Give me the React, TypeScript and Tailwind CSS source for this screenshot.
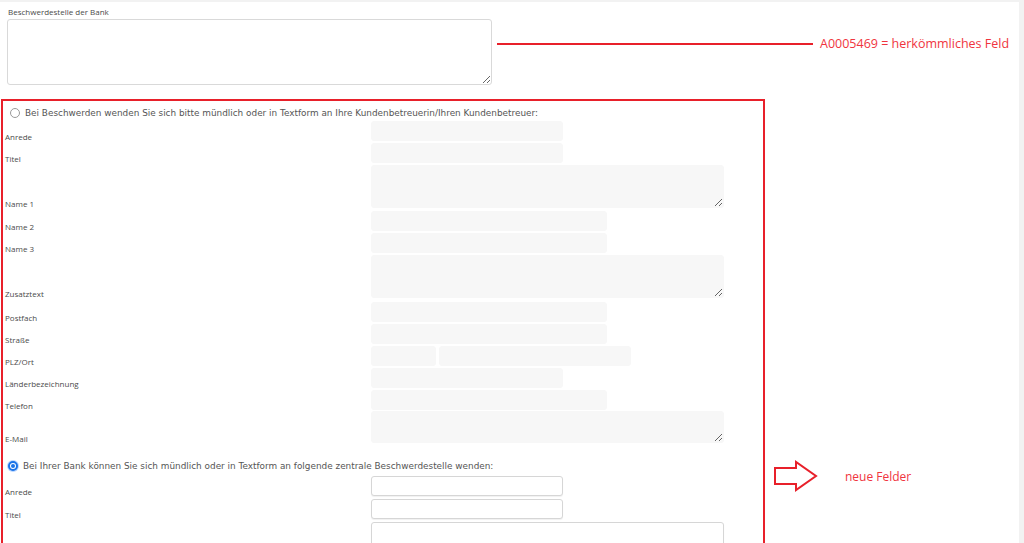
import React from 'react';

const labelFont = { fontFamily: '"Open Sans", "Noto Sans", sans-serif' };
const radioFont = { fontFamily: '"DejaVu Sans", Verdana, sans-serif' };

type Field = { w: number; h?: number; area?: boolean };

interface RowProps {
  label: string;
  fields: Field[];
  mb?: number;
  active?: boolean;
}

function Row({ label, fields, mb = 2, active = false }: RowProps) {
  const mbClass = mb === 1 ? 'mb-px' : mb === 3 ? 'mb-[3px]' : mb === 4 ? 'mb-[4px]' : 'mb-[2px]';
  const base = active
    ? 'bg-white border border-[#d6d6d6] shadow-[0_1px_1px_rgba(0,0,0,0.06)]'
    : 'bg-[#f7f7f7] border border-[#f7f7f7]';
  return (
    <div className={`flex items-end ${mbClass}`}>
      <div
        className="w-[368px] shrink-0 pl-[2px] text-[8px] leading-[9px] text-[#4a4a4a]"
        style={labelFont}
      >
        {label}
      </div>
      <div className="flex gap-[3px]">
        {fields.map((f, i) =>
          f.area ? (
            <textarea
              key={i}
              readOnly
              className={`block rounded-[3px] outline-none ${base}`}
              style={{ width: f.w, height: f.h ?? 43 }}
            />
          ) : (
            <input
              key={i}
              readOnly
              className={`block h-[20px] rounded-[3px] outline-none ${base}`}
              style={{ width: f.w }}
            />
          )
        )}
      </div>
    </div>
  );
}

function Radio({ checked }: { checked?: boolean }) {
  if (checked) {
    return (
      <span className="flex h-[12px] w-[12px] items-center justify-center rounded-full bg-[#bcd7ff]">
        <span className="flex h-[10px] w-[10px] items-center justify-center rounded-full border-[2px] border-[#1a73e8] bg-white">
          <span className="h-[4px] w-[4px] rounded-full bg-[#1a73e8]" />
        </span>
      </span>
    );
  }
  return <span className="h-[10px] w-[10px] rounded-full border border-[#9a9a9a] bg-white" />;
}

export default function App() {
  return (
    <div className="relative h-[543px] w-[1024px] overflow-hidden bg-[#f2f2f2]">
      <div className="mt-[2px] h-[541px] w-[1019px] bg-white">
        <div className="pl-[8px] pt-[5px] text-[8px] leading-[10px] text-[#4a4a4a]" style={labelFont}>
          Beschwerdestelle der Bank
        </div>
        <textarea
          readOnly
          className="mt-[2px] ml-[7px] block h-[66px] w-[485px] rounded-[3px] border border-[#d9d9d9] bg-white outline-none"
        />

        <section className="mt-[14px] ml-px w-[764px] border-2 border-b-0 border-[#e8202a] h-[450px]">
          <div className="flex h-[20px] items-center gap-[5px] pl-[7px] pt-[4px]">
            <Radio />
            <span className="text-[8.9px] leading-[10px] text-[#555]" style={radioFont}>
              Bei Beschwerden wenden Sie sich bitte mündlich oder in Textform an Ihre Kundenbetreuerin/Ihren Kundenbetreuer:
            </span>
          </div>
          <Row label="Anrede" fields={[{ w: 192 }]} />
          <Row label="Titel" fields={[{ w: 192 }]} />
          <Row label="Name 1" fields={[{ w: 353, area: true }]} mb={3} />
          <Row label="Name 2" fields={[{ w: 236 }]} />
          <Row label="Name 3" fields={[{ w: 236 }]} />
          <Row label="Zusatztext" fields={[{ w: 353, area: true }]} mb={4} />
          <Row label="Postfach" fields={[{ w: 236 }]} />
          <Row label="Straße" fields={[{ w: 236 }]} />
          <Row label="PLZ/Ort" fields={[{ w: 65 }, { w: 192 }]} />
          <Row label="Länderbezeichnung" fields={[{ w: 192 }]} />
          <Row label="Telefon" fields={[{ w: 236 }]} mb={1} />
          <Row label="E-Mail" fields={[{ w: 353, h: 32, area: true }]} mb={1} />

          <div className="mt-[13px] flex h-[20px] items-center gap-[4px] pl-[4px]">
            <Radio checked />
            <span className="text-[8.9px] leading-[10px] text-[#555]" style={radioFont}>
              Bei Ihrer Bank können Sie sich mündlich oder in Textform an folgende zentrale Beschwerdestelle wenden:
            </span>
          </div>
          <Row label="Anrede" fields={[{ w: 192 }]} mb={3} active />
          <Row label="Titel" fields={[{ w: 192 }]} mb={3} active />
          <Row label="" fields={[{ w: 353, area: true }]} active />
        </section>
      </div>

      {/* annotations */}
      <div className="absolute left-[497px] top-[43px] h-[2px] w-[316px] bg-[#e8202a]" />
      <div
        className="absolute left-[820px] top-[35px] text-[12.5px] leading-[18px] text-[#f0343e]"
        style={labelFont}
      >
        A0005469 = herkömmliches Feld
      </div>
      <svg className="absolute left-[773px] top-[460px]" width="46" height="32" viewBox="0 0 46 32">
        <polygon
          points="2,8 23,8 23,2 43,16 23,30 23,24 2,24"
          fill="none"
          stroke="#e8202a"
          strokeWidth="2"
          strokeLinejoin="miter"
        />
      </svg>
      <div
        className="absolute left-[845px] top-[469px] text-[12px] leading-[16px] text-[#f0343e]"
        style={labelFont}
      >
        neue Felder
      </div>
    </div>
  );
}
